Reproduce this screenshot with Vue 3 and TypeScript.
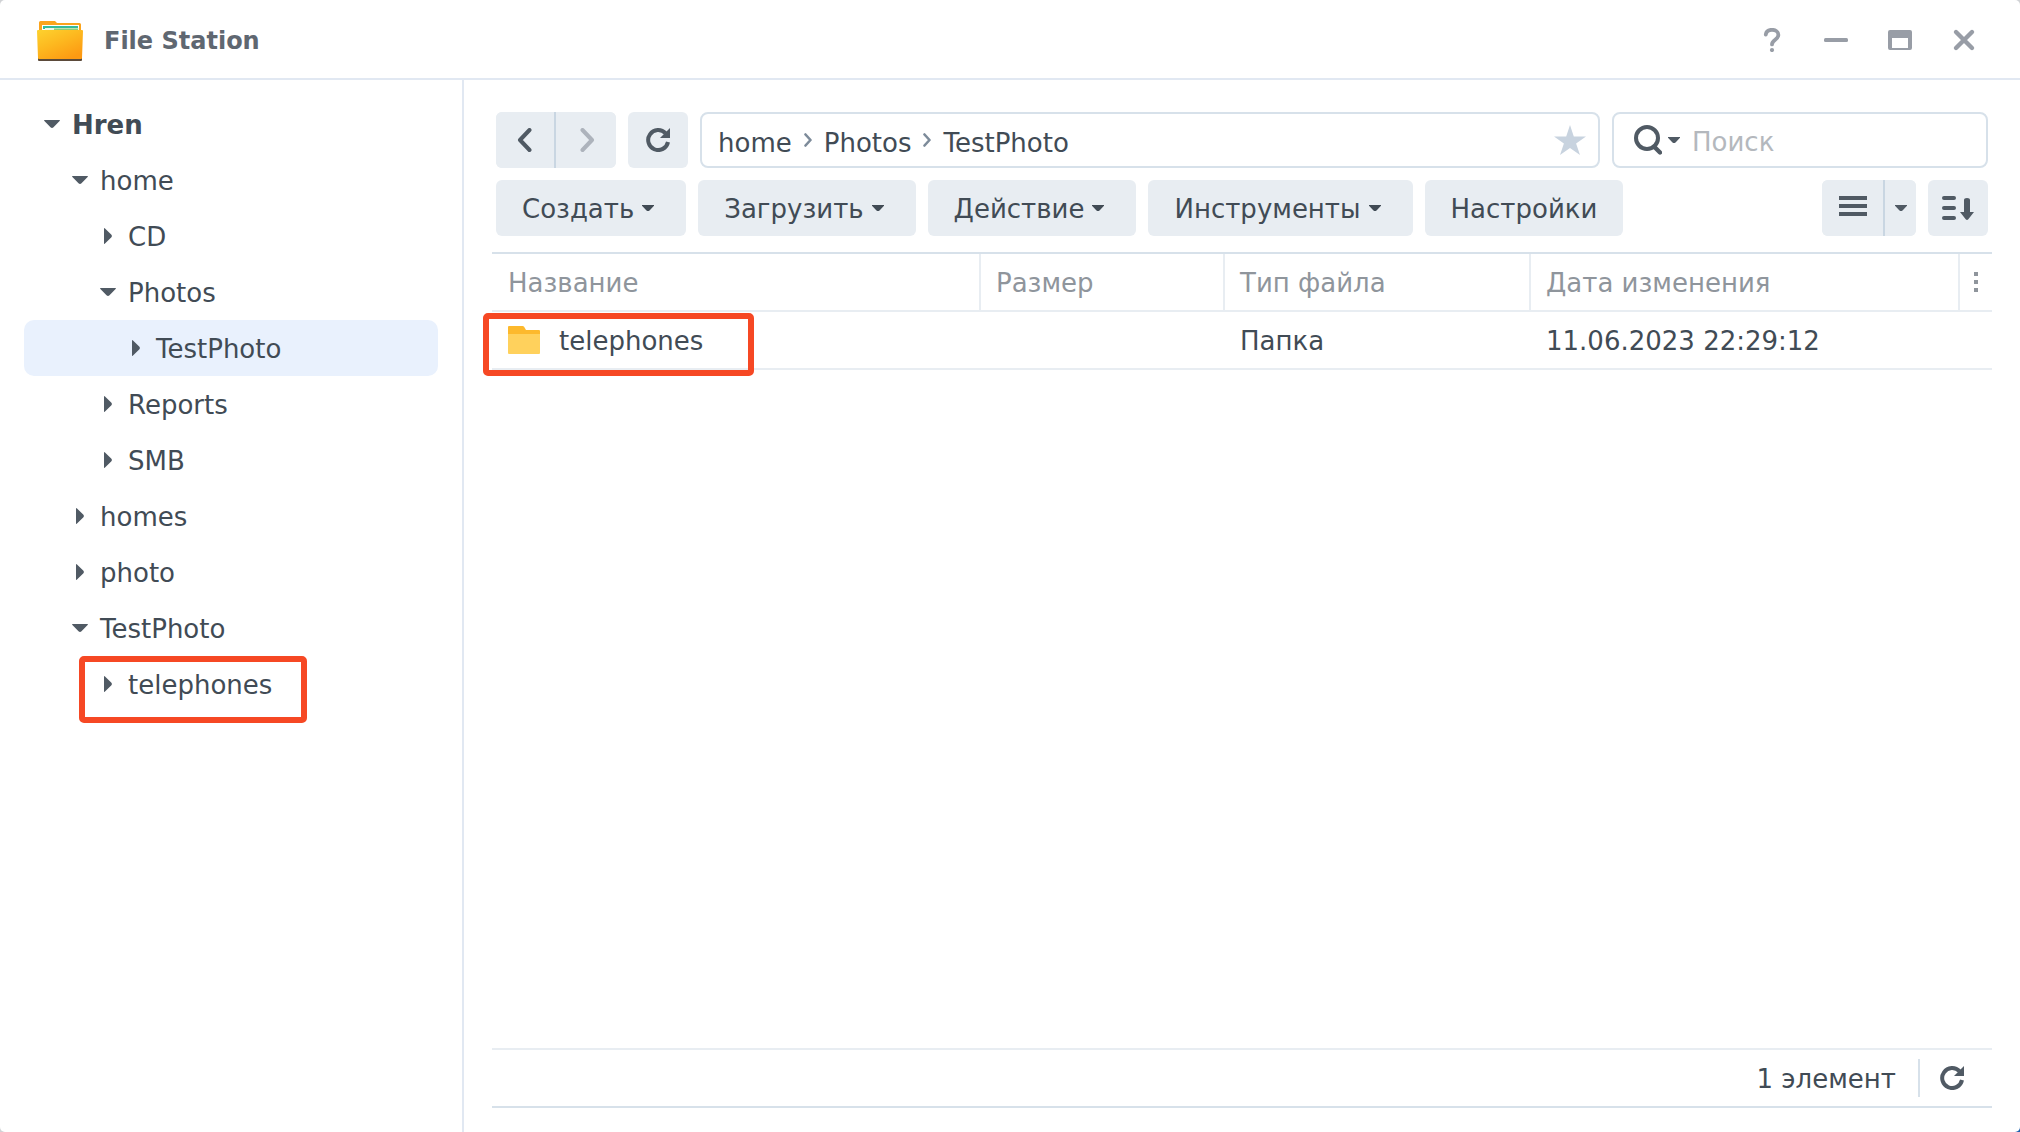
<script setup lang="ts">
import { ref } from 'vue'

interface TreeNode {
  label: string
  depth: number
  open: boolean
  root?: boolean
  selected?: boolean
  marked?: boolean
}

interface ToolbarItem {
  label: string
  menu: boolean
}

const nodes: TreeNode[] = [
  { label: 'Hren', depth: 0, open: true, root: true },
  { label: 'home', depth: 1, open: true },
  { label: 'CD', depth: 2, open: false },
  { label: 'Photos', depth: 2, open: true },
  { label: 'TestPhoto', depth: 3, open: false, selected: true },
  { label: 'Reports', depth: 2, open: false },
  { label: 'SMB', depth: 2, open: false },
  { label: 'homes', depth: 1, open: false },
  { label: 'photo', depth: 1, open: false },
  { label: 'TestPhoto', depth: 1, open: true },
  { label: 'telephones', depth: 2, open: false, marked: true },
]

const crumbs: string[] = ['home', 'Photos', 'TestPhoto']

const tools: ToolbarItem[] = [
  { label: 'Создать', menu: true },
  { label: 'Загрузить', menu: true },
  { label: 'Действие', menu: true },
  { label: 'Инструменты', menu: true },
  { label: 'Настройки', menu: false },
]

const query = ref('')
</script>

<template>
  <div class="window">
    <header class="titlebar">
      <svg class="app-icon" width="48" height="42" viewBox="0 0 48 42" aria-hidden="true">
        <defs>
          <linearGradient id="front" x1="0" y1="0" x2="0.7" y2="1">
            <stop offset="0" stop-color="#fdd22f" />
            <stop offset="0.5" stop-color="#fdb81f" />
            <stop offset="1" stop-color="#fd9a12" />
          </linearGradient>
        </defs>
        <path d="M3 1.500q0-1.500 1.500-1.500H19l2 2h22.500q1.500 0 1.500 1.500V36H3z" fill="#fba41c" />
        <path d="M6 4h37v8H6z" fill="#fff" />
        <path d="M7 5h35v3H7z" fill="#35bb9c" />
        <path d="M9 7h34v5H9z" fill="#eef8e8" />
        <path d="M18 7.500h24V10H18z" fill="#8bcf77" />
        <path d="M2 36h44v3q0 1-1 1H3q-1 0-1-1z" fill="#5b4a3a" />
        <path d="M1 10q0-1 1-1h44q1 0 1 1l-1 27q0 1-1 1H3q-1 0-1-1z" fill="url(#front)" />
      </svg>
      <h1 class="app-name">File Station</h1>
      <div class="controls">
        <button type="button" aria-label="Help">
          <svg width="24" height="24" viewBox="0 0 24 24">
            <path d="M5.800 6.500C6.200 3.400 8.700 1.800 12 1.800s6.400 2 6.400 5.200c0 4.600-6.400 4.800-6.400 9.400" fill="none" stroke="currentColor" stroke-width="3.800" stroke-linecap="round" />
            <circle cx="12" cy="22" r="2.100" fill="currentColor" />
          </svg>
        </button>
        <button type="button" aria-label="Minimize">
          <svg width="24" height="24" viewBox="0 0 24 24"><rect y="10" width="24" height="4" rx="1.500" fill="currentColor" /></svg>
        </button>
        <button type="button" aria-label="Maximize">
          <svg width="24" height="24" viewBox="0 0 24 24">
            <path fill-rule="evenodd" d="M2 2h20q2 0 2 2v16q0 2-2 2H2q-2 0-2-2V4q0-2 2-2zM4 10v10h16V10z" fill="currentColor" />
          </svg>
        </button>
        <button type="button" aria-label="Close">
          <svg width="24" height="24" viewBox="0 0 24 24"><path d="M4 4l16 16M20 4L4 20" stroke="currentColor" stroke-width="4.400" stroke-linecap="round" /></svg>
        </button>
      </div>
    </header>

    <div class="body">
      <nav class="tree" aria-label="Folders">
        <ul>
          <li v-for="(node, i) in nodes" :key="i">
            <a href="#" class="node" :class="{ selected: node.selected, root: node.root }" :style="{ paddingLeft: 20 + node.depth * 28 + 'px' }">
              <svg class="twisty" width="16" height="16" viewBox="0 0 16 16" aria-hidden="true">
                <path v-if="node.open" d="M.600 4h14.800q1 .400.200 1L9.500 11.200Q8 12.600 6.500 11.200L.400 5Q-.400 4.400.600 4z" />
                <path v-else d="M4 .600v14.800q.400 1 1 .200L11.200 9.500Q12.600 8 11.200 6.500L5 .400Q4.400-.400 4 .600z" />
              </svg>
              <span class="label">{{ node.label }}</span>
              <span v-if="node.marked" class="mark mark-tree"></span>
            </a>
          </li>
        </ul>
      </nav>

      <main class="content">
        <div class="bar">
          <div class="group">
            <button type="button" class="btn nav-btn" aria-label="Back">
              <svg width="24" height="24" viewBox="0 0 24 24"><path d="M16.500 2L7 12l9.500 10" fill="none" stroke="currentColor" stroke-width="4" stroke-linecap="round" stroke-linejoin="round" /></svg>
            </button>
            <button type="button" class="btn nav-btn next" aria-label="Forward" disabled>
              <svg width="24" height="24" viewBox="0 0 24 24"><path d="M8.500 2L18 12 8.500 22" fill="none" stroke="currentColor" stroke-width="4" stroke-linecap="round" stroke-linejoin="round" /></svg>
            </button>
          </div>
          <button type="button" class="btn square" aria-label="Reload">
            <svg width="24" height="24" viewBox="0 0 24 24">
              <path d="M19.500 5.200A10 10 0 1 0 22 14" fill="none" stroke="currentColor" stroke-width="4" />
              <path d="M24 0v10H14z" fill="currentColor" />
            </svg>
          </button>
          <div class="path">
            <template v-for="(crumb, i) in crumbs" :key="crumb">
              <svg v-if="i > 0" class="chevron" width="8" height="14" viewBox="0 0 8 14" aria-hidden="true"><path d="M1.500 1.500L6.500 7l-5 5.500" fill="none" stroke="currentColor" stroke-width="2.600" stroke-linecap="round" stroke-linejoin="round" /></svg>
              <a href="#" class="crumb">{{ crumb }}</a>
            </template>
            <button type="button" class="star" aria-label="Favorite">
              <svg width="32" height="30" viewBox="0 0 32 30"><path d="M16 0l3.800 11.400H32l-9.900 7.200L26 30l-10-7L6 30l3.900-11.400L0 11.400h12.200z" fill="currentColor" /></svg>
            </button>
          </div>
          <div class="search">
            <button type="button" class="search-menu" aria-label="Search options">
              <svg width="28" height="30" viewBox="0 0 28 30">
                <circle cx="13" cy="13" r="11" fill="none" stroke="currentColor" stroke-width="4" />
                <path d="M20 21.500l6 6" stroke="currentColor" stroke-width="4.400" stroke-linecap="round" />
              </svg>
              <svg width="12" height="6" viewBox="0 0 12 6"><path d="M0 0h12v.800L7.500 5.400Q6 6.600 4.500 5.400L0 .800z" fill="currentColor" /></svg>
            </button>
            <input v-model="query" type="text" placeholder="Поиск" aria-label="Поиск" />
          </div>
        </div>

        <div class="bar">
          <button v-for="tool in tools" :key="tool.label" type="button" class="btn tool" :class="{ menu: tool.menu }">
            <span class="label">{{ tool.label }}</span>
            <svg v-if="tool.menu" width="12" height="6" viewBox="0 0 12 6" aria-hidden="true"><path d="M0 0h12v.800L7.500 5.400Q6 6.600 4.500 5.400L0 .800z" fill="currentColor" /></svg>
          </button>
          <div class="group view">
            <button type="button" class="btn list" aria-label="List view">
              <svg width="28" height="24" viewBox="0 0 28 24"><path d="M0 0h28v4H0zM0 8h28v4H0zM0 16h28v4H0z" fill="currentColor" /></svg>
            </button>
            <button type="button" class="btn drop" aria-label="View options">
              <svg width="12" height="6" viewBox="0 0 12 6"><path d="M0 0h12v.800L7.500 5.400Q6 6.600 4.500 5.400L0 .800z" fill="currentColor" /></svg>
            </button>
          </div>
          <button type="button" class="btn square" aria-label="Sort">
            <svg width="32" height="24" viewBox="0 0 32 24">
              <path d="M2 2h10M2 12h10M2 22h10" stroke="currentColor" stroke-width="4" stroke-linecap="round" />
              <path d="M22 4q0-2 3-2t3 2v12h4l-5.700 7.300q-1.300 1.400-2.600 0L18 16h4z" fill="currentColor" />
            </svg>
          </button>
        </div>

        <div class="listing">
          <table>
            <colgroup>
              <col />
              <col class="col-size" />
              <col class="col-type" />
              <col class="col-date" />
              <col class="col-more" />
            </colgroup>
            <thead>
              <tr>
                <th scope="col"><span class="label">Название</span></th>
                <th scope="col"><span class="label">Размер</span></th>
                <th scope="col"><span class="label">Тип файла</span></th>
                <th scope="col"><span class="label">Дата изменения</span></th>
                <th scope="col" class="more">
                  <button type="button" aria-label="Columns">
                    <svg width="4" height="20" viewBox="0 0 4 20"><path d="M0 0h4v4H0zM0 8h4v4H0zM0 16h4v4H0z" fill="currentColor" /></svg>
                  </button>
                </th>
              </tr>
            </thead>
            <tbody>
              <tr>
                <td>
                  <div class="file">
                    <svg width="32" height="28" viewBox="0 0 32 28" aria-hidden="true">
                      <path d="M1 0h13.500q1 0 1.600.800L18 4h13q1 0 1 1v5H0V1q0-1 1-1z" fill="#fdb92c" />
                      <path d="M0 8h32v19q0 1-1 1H1q-1 0-1-1z" fill="#ffd15c" />
                    </svg>
                    <span class="label">telephones</span>
                    <span class="mark mark-file"></span>
                  </div>
                </td>
                <td></td>
                <td><span class="label">Папка</span></td>
                <td><span class="label">11.06.2023 22:29:12</span></td>
                <td></td>
              </tr>
            </tbody>
          </table>
        </div>

        <footer class="status">
          <span class="label">1 элемент</span>
          <button type="button" class="refresh" aria-label="Refresh list">
            <svg width="24" height="24" viewBox="0 0 24 24">
              <path d="M19.500 5.200A10 10 0 1 0 22 14" fill="none" stroke="currentColor" stroke-width="4" />
              <path d="M24 0v10H14z" fill="currentColor" />
            </svg>
          </button>
        </footer>
      </main>
    </div>
  </div>
</template>

<style>
body {
  margin: 0;
  background: linear-gradient(to bottom right, #d0d2d5 90%, #1f62ad 98%);
}
</style>

<style scoped>
.window,
.window * {
  box-sizing: border-box;
}

.window {
  display: flex;
  flex-direction: column;
  min-height: 100vh;
  background: #fff;
  border-radius: 5px;
  color: #414b55;
  font-family: "DejaVu Sans", Verdana, sans-serif;
  font-size: 26px;
  line-height: 30px;
}

button {
  display: flex;
  align-items: center;
  justify-content: center;
  margin: 0;
  padding: 0;
  border: 0;
  background: none;
  color: #505a64;
  font: inherit;
}

svg {
  display: block;
  flex: none;
}

a {
  color: inherit;
  text-decoration: none;
}

.label {
  padding-top: 2px;
  white-space: nowrap;
}

.titlebar {
  display: flex;
  align-items: center;
  height: 80px;
  padding: 0 44px 0 36px;
  border-bottom: 2px solid #e1e8f2;
}

.app-icon {
  margin-top: 6px;
}

.app-name {
  margin: 0 0 0 20px;
  padding-top: 4px;
  color: #5f6771;
  font-size: 24px;
  font-weight: 700;
}

.controls {
  display: flex;
  gap: 40px;
  margin-left: auto;
  padding-top: 2px;
}

.controls button {
  color: #989da6;
}

.body {
  display: flex;
  flex: 1;
}

.tree {
  flex: none;
  width: 464px;
  padding: 16px 24px;
  border-right: 2px solid #e1e8f2;
}

.tree ul {
  margin: 0;
  padding: 0;
  list-style: none;
}

.node {
  position: relative;
  display: flex;
  align-items: center;
  gap: 12px;
  height: 56px;
  border-radius: 10px;
}

.node.selected {
  background: #e9f1fd;
}

.node.root {
  font-weight: 700;
}

.twisty {
  fill: #505a64;
}

.mark {
  position: absolute;
  border: 6px solid #f64824;
  border-radius: 5px;
}

.mark-tree {
  top: 0;
  left: 55px;
  width: 228px;
  height: 67px;
}

.mark-file {
  top: 1px;
  left: -25px;
  width: 271px;
  height: 63px;
}

.content {
  display: flex;
  flex: 1;
  flex-direction: column;
  min-width: 0;
  padding: 32px 28px 24px;
}

.bar {
  display: flex;
  gap: 12px;
  margin: 0 4px 12px;
}

.btn {
  height: 56px;
  border-radius: 6px;
  background: #e8edf2;
}

.group {
  display: flex;
  border-radius: 6px;
  background: #e8edf2;
}

.group .btn + .btn {
  border-left: 2px solid #c9d6e2;
  border-radius: 0 6px 6px 0;
}

.nav-btn {
  width: 58px;
}

.nav-btn.next {
  width: 62px;
}

.nav-btn:disabled {
  color: #adb3bc;
}

.square {
  width: 60px;
}

.list {
  width: 61px;
}

.drop {
  width: 33px;
}

.view {
  margin-left: auto;
}

.tool {
  gap: 8px;
  padding: 0 26px;
  color: #414b55;
}

.tool.menu {
  padding-right: 32px;
}

.path,
.search {
  display: flex;
  align-items: center;
  height: 56px;
  border: 2px solid #d7e1ea;
  border-radius: 8px;
}

.path {
  flex: 1;
  gap: 12px;
  padding: 0 12px 0 16px;
}

.crumb {
  padding-top: 6px;
}

.chevron {
  color: #7d8b9a;
}

.star {
  margin-left: auto;
}

.star svg {
  color: #c8d3df;
}

.search {
  width: 376px;
  padding: 0 16px 0 20px;
}

.search-menu {
  gap: 6px;
}

.search input {
  flex: 1;
  min-width: 0;
  height: 52px;
  margin-left: 12px;
  padding: 4px 0 0;
  border: 0;
  outline: 0;
  background: none;
  color: inherit;
  font: inherit;
}

.search input::placeholder {
  color: #b4b8bd;
  opacity: 1;
}

.listing {
  flex: 1;
  margin-top: 4px;
  border-top: 2px solid #d7e1ea;
}

table {
  width: 100%;
  border-collapse: separate;
  border-spacing: 0;
  table-layout: fixed;
}

.col-size {
  width: 244px;
}

.col-type {
  width: 306px;
}

.col-date {
  width: 429px;
}

.col-more {
  width: 32px;
}

th,
td {
  height: 58px;
  padding: 0 0 0 15px;
  border-bottom: 2px solid #e8edf2;
  text-align: left;
  vertical-align: middle;
}

th:first-child,
td:first-child {
  padding-left: 16px;
}

th {
  border-right: 2px solid #e8edf2;
  color: #8f959c;
  font-weight: 400;
}

th.more {
  padding-left: 14px;
  border-right: 0;
}

th .label,
td > .label {
  display: block;
}

.more button {
  color: #8f959c;
}

.file {
  position: relative;
  display: flex;
  align-items: center;
  gap: 19px;
  height: 56px;
}

.status {
  display: flex;
  align-items: center;
  justify-content: flex-end;
  gap: 22px;
  height: 60px;
  padding-right: 28px;
  border-top: 2px solid #e8edf2;
  border-bottom: 2px solid #d7e1ea;
}

.refresh {
  height: 38px;
  padding-left: 20px;
  border-left: 2px solid #d7e1ea;
}
</style>
